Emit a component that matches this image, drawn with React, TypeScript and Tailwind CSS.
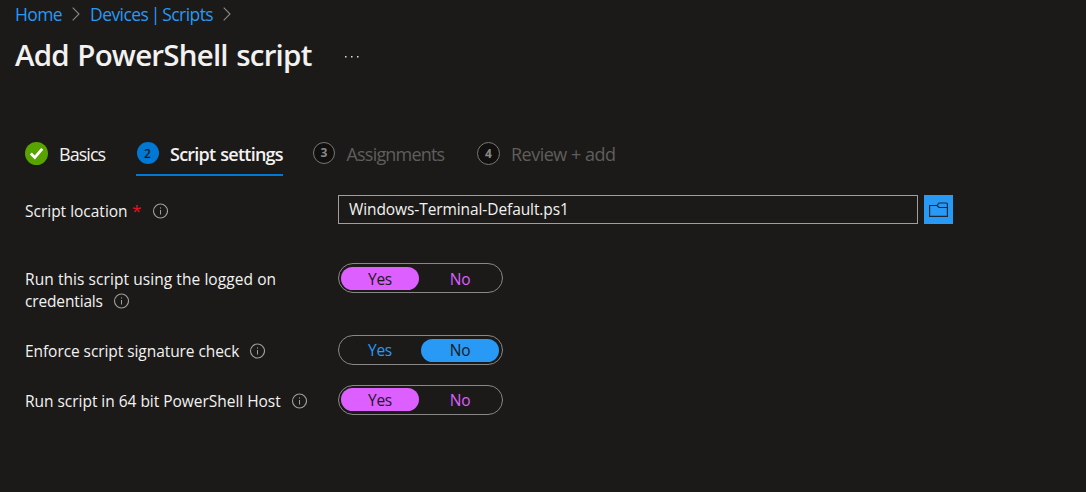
import type { ReactNode } from 'react';

function Chevron() {
  return (
    <svg width="8" height="14" viewBox="0 0 8 14" fill="none" stroke="#8a8886" strokeWidth="1.1">
      <path d="M0.7 0.7 7 7 0.7 13.3" />
    </svg>
  );
}

function Info({ className }: { className: string }) {
  return (
    <svg className={className} width="16" height="16" viewBox="0 0 16 16" fill="none" stroke="#a19f9d">
      <circle cx="8.5" cy="8" r="7" strokeWidth="1.1" />
      <path d="M8.5 7v4.5M8.5 4.4v1.2" strokeWidth="1" />
    </svg>
  );
}

function Line({ className, children }: { className: string; children: ReactNode }) {
  return <span className={`block whitespace-nowrap ${className}`}>{children}</span>;
}

interface ToggleProps {
  value: 'Yes' | 'No';
  accent: 'violet' | 'blue';
  padding: string;
  labelPadding: string;
}

function Toggle({ value, accent, padding, labelPadding }: ToggleProps) {
  const fill = accent === 'violet' ? 'bg-[#dd5fff]' : 'bg-[#2899f5]';
  const ink = accent === 'violet' ? 'text-[#dd5fff]' : 'text-[#2899f5]';
  return (
    <div className={`flex h-[30px] w-[165px] gap-[2px] rounded-full border border-[#8a8886] px-[2px] ${padding}`}>
      {(['Yes', 'No'] as const).map((option) => (
        <button
          key={option}
          type="button"
          className={`flex h-[23px] w-[78px] items-center justify-center rounded-full text-[15.5px] leading-[23px] tracking-[-0.3px] ${
            option === value ? `${fill} text-[#1b1a19]` : ink
          }`}
        >
          <span className={labelPadding}>{option}</span>
        </button>
      ))}
    </div>
  );
}

export default function App() {
  return (
    <main className="h-[492px] w-[1086px] overflow-hidden bg-[#1b1a19] font-['Open_Sans','Noto_Sans',sans-serif] text-[#f3f2f1]">
      <nav className="flex h-7 items-center pl-[15px] text-[17.5px] leading-7 text-[#2899f5]">
        <Line className="w-[57px] tracking-[-0.6px]">Home</Line>
        <Chevron />
        <Line className="ml-[10px] w-[133px] tracking-[-0.57px] [word-spacing:-1.5px]">Devices | Scripts</Line>
        <Chevron />
      </nav>
      <header className="flex h-[54px] items-center pl-[15px]">
        <h1 className="-mt-px w-[330px] whitespace-nowrap text-[29.5px] font-semibold leading-[54px] tracking-[-0.78px] [word-spacing:1.5px]">Add PowerShell script</h1>
        <svg className="mt-[3px]" width="14" height="2" viewBox="0 0 14 2" fill="#e1dfdd">
          <rect width="1.5" height="1.5" />
          <rect x="6" width="1.5" height="1.5" />
          <rect x="12" width="1.5" height="1.5" />
        </svg>
      </header>
      <div className="mt-[57px] flex h-[37px] pl-[25px] text-[18px] leading-[30px]">
        <div className="flex w-[111px]">
          <svg className="mt-[3px]" width="23" height="23" viewBox="0 0 23 23">
            <circle cx="11.5" cy="11.5" r="11.5" fill="#57a300" />
            <path d="m5.8 11.5 4 4 7.4-8.6" fill="none" stroke="#fff" strokeWidth="2.7" />
          </svg>
          <Line className="ml-[11px] tracking-[-0.95px]">Basics</Line>
        </div>
        <div className="flex h-[37px] w-[147px] border-b-2 border-[#0078d4]">
          <span className="ml-[0.5px] mt-[3px] flex size-[22px] items-center justify-center rounded-full bg-[#0078d4] pt-px text-[12px] font-semibold text-[#1b1a19]">2</span>
          <Line className="ml-[11.5px] font-semibold tracking-[-0.76px] [word-spacing:1px]">Script settings</Line>
        </div>
        <div className="ml-[30px] flex w-[164px] text-[#605e5c]">
          <span className="mt-[3px] flex size-[22px] items-center justify-center rounded-full border border-[#797775] bg-[#11100f] text-[12px] font-bold text-[#8a8886]">3</span>
          <Line className="ml-[11.5px] tracking-[-0.8px]">Assignments</Line>
        </div>
        <div className="flex text-[#605e5c]">
          <span className="mt-[3px] flex size-[23px] items-center justify-center rounded-full border border-[#797775] bg-[#11100f] text-[12px] font-bold text-[#8a8886]">4</span>
          <Line className="ml-[11px] tracking-[-0.5px]">Review + add</Line>
        </div>
      </div>
      <form className="pl-[25px] text-[15.5px] leading-[22px]">
        <div className="mt-[19px] flex h-[68px]">
          <div className="flex w-[313px] pt-[5px]">
            <Line className="w-[107px] tracking-[-0.01px]">Script location</Line>
            <span className="w-[20px] text-[17px] text-[#e81123]">*</span>
            <Info className="mt-[3px]" />
          </div>
          <div className="h-[29px] w-[580px] border border-[#a19f9d] pl-[10px] leading-[27px]">
            <Line className="tracking-[-0.09px]">Windows-Terminal-Default.ps1</Line>
          </div>
          <button type="button" className="ml-[6px] flex size-[29px] items-center justify-center bg-[#2899f5]">
            <svg width="19" height="15" viewBox="0 0 19 15" fill="none" stroke="#1b2a3a" strokeWidth="1.2">
              <path d="M.6 3.5H8L10 1h7.4q1 0 1 1v12.4H.6zM8 3.5l2 2h8.4" />
            </svg>
          </button>
        </div>
        <div className="flex h-[72px]">
          <div className="w-[313px] pt-[5px]">
            <Line className="tracking-[0.07px]">Run this script using the logged on</Line>
            <div className="flex">
              <Line className="w-[88px] tracking-[-0.15px]">credentials</Line>
              <Info className="mt-[3px]" />
            </div>
          </div>
          <Toggle value="Yes" accent="violet" padding="pt-[3px]" labelPadding="pt-[1px]" />
        </div>
        <div className="flex h-[50px]">
          <div className="flex w-[313px] pt-[5px]">
            <Line className="w-[224px] tracking-[-0.07px]">Enforce script signature check</Line>
            <Info className="mt-[3px]" />
          </div>
          <Toggle value="No" accent="blue" padding="pt-[3px]" labelPadding="pb-[1px]" />
        </div>
        <div className="flex h-[50px]">
          <div className="flex w-[313px] pt-[5px]">
            <Line className="w-[266px] tracking-[-0.03px]">Run script in 64 bit PowerShell Host</Line>
            <Info className="mt-[3px]" />
          </div>
          <Toggle value="Yes" accent="violet" padding="pt-[2px]" labelPadding="pt-[2px]" />
        </div>
      </form>
    </main>
  );
}
